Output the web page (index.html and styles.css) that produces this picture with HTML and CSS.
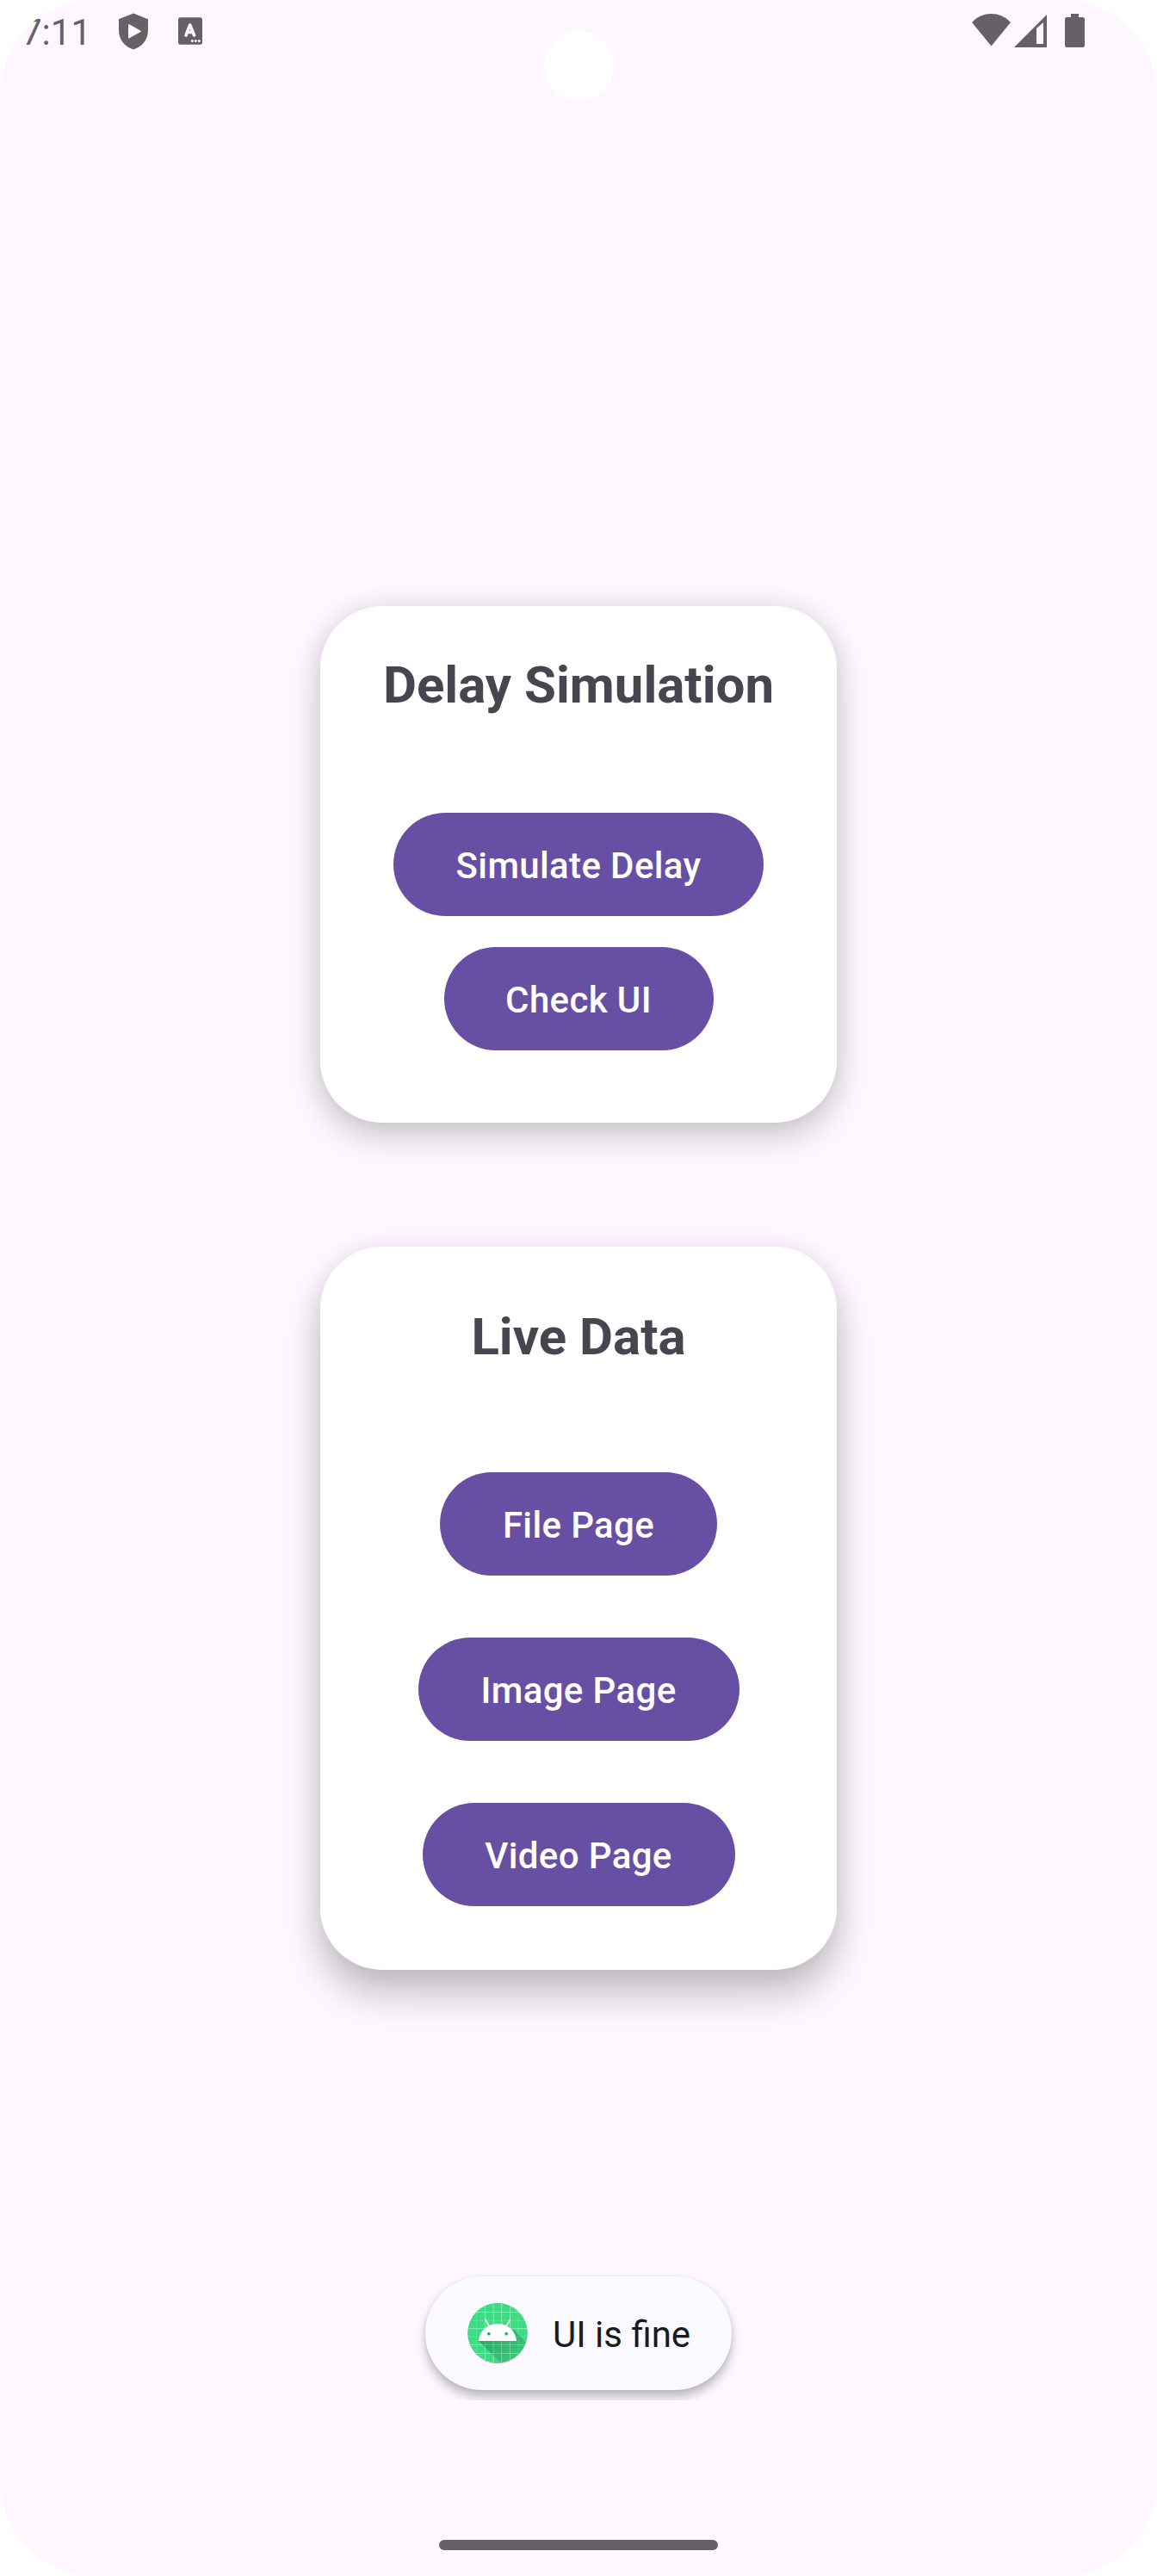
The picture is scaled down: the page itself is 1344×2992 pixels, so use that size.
FILE: index.html
```html
<!DOCTYPE html>
<html lang="en">
<head>
<meta charset="utf-8">
<title>Delay Simulation</title>
<link rel="stylesheet" href="styles.css">
</head>
<body>
<div class="screen">
  <header class="status-bar">
    <span class="clock">7:11</span>
    <svg class="shield" width="36" height="43" viewBox="0 0 36 43"><path fill="currentColor" fill-rule="evenodd" d="M18 .5 35 7.3V20c0 11-7 19.500-17 22.500C8 39.500 1 31 1 20V7.300zM12 14.500V28.500q0 1.500 1.300.8L26.400 22q1-.7 0-1.300L13.300 13.300Q12 12.700 12 14.500z"/></svg>
    <svg class="keyboard" width="28" height="32" viewBox="0 0 28 32"><rect width="28" height="31.500" y=".3" rx="2.500" fill="currentColor"/><path d="M9 21 13.700 9 18.600 21M10.500 17.500h6.500" fill="none" stroke="#fef7ff" stroke-width="3.600" stroke-linecap="round" stroke-linejoin="round"/><g fill="#fef7ff"><circle cx="16.300" cy="27.500" r="1.500"/><circle cx="20.300" cy="27.500" r="1.500"/><circle cx="24.300" cy="27.500" r="1.500"/></g></svg>
    <span class="spacer"></span>
    <svg class="wifi" width="45" height="38" viewBox="0 0 45 38"><path fill="currentColor" d="M0 10C12-3.300 33-3.300 45 10L22.500 37.500z"/></svg>
    <svg class="signal" width="38" height="38" viewBox="0 0 38 38"><path fill="currentColor" fill-rule="evenodd" d="M38 0V38H0zM26 16V34h8V9z"/></svg>
    <svg class="battery" width="23" height="39" viewBox="0 0 23 39"><path fill="currentColor" d="M7 0h9v4h4.500Q23 4 23 6.500v30Q23 39 20.500 39h-18Q0 39 0 36.500v-30Q0 4 2.500 4H7z"/></svg>
  </header>
  <div class="camera"></div>
  <main class="content">
    <section class="card card-delay">
      <h2>Delay Simulation</h2>
      <button class="simulate">Simulate Delay</button>
      <button class="check">Check UI</button>
    </section>
    <section class="card card-live">
      <h2>Live Data</h2>
      <button class="file">File Page</button>
      <button class="image">Image Page</button>
      <button class="video">Video Page</button>
    </section>
  </main>
  <div class="toast-area">
    <div class="toast">
      <svg class="app-icon" width="72" height="72" viewBox="0 0 72 72">
        <defs>
          <clipPath id="disc"><circle cx="36" cy="35.500" r="34.700"/></clipPath>
          <linearGradient id="shade" x1="0" y1="0" x2="1" y2="1"><stop offset="0" stop-color="#000" stop-opacity=".3"/><stop offset="1" stop-color="#000" stop-opacity="0"/></linearGradient>
        </defs>
        <circle cx="36" cy="36.500" r="34.700" fill="#a9aeb0"/>
        <g clip-path="url(#disc)">
          <rect width="72" height="72" fill="#3ddc84"/>
          <path d="M21.500 0v72M31.200 0v72M40.700 0v72M50.500 0v72M0 11.500h72M0 30.700h72M0 49.500h72M0 59.500h72" stroke="#fff" stroke-opacity=".45" stroke-width=".9"/>
          <path d="M11.500 0v72M60 0v72M0 21.300h72M0 40h72" stroke="#fff" stroke-opacity=".18" stroke-width=".9"/>
          <path d="M14 45 43 74H80V58L55 32z" fill="url(#shade)"/>
        </g>
        <path d="M22 20.500 26.500 28M50.500 20.500 46 28" stroke="#fff" stroke-width="1.500" stroke-linecap="round"/>
        <path d="M14 45C15 33 24 25 36 25s21 8 22 20z" fill="#fff"/>
        <circle cx="25.800" cy="36.700" r="1.900" fill="#2fae6a"/><circle cx="46.200" cy="36.700" r="1.900" fill="#2fae6a"/>
      </svg>
      <span>UI is fine</span>
    </div>
  </div>
  <footer class="nav"><div class="handle"></div></footer>
</div>
</body>
</html>
```
FILE: styles.css
```css
body {
  margin: 0;
  background: #fff;
  font-family: Roboto, sans-serif;
}

.screen {
  position: relative;
  display: flex;
  flex-direction: column;
  width: 1344px;
  height: 2992px;
  overflow: hidden;
  border-radius: 108px;
  background: #fef7ff;
}

.status-bar {
  display: flex;
  align-items: flex-start;
  box-sizing: border-box;
  height: 156px;
  padding: 15px 84px 0 25px;
  color: #656266;
}

.clock {
  width: 112px;
  margin-top: -2px;
  font-size: 42px;
  line-height: 49px;
}

.keyboard { margin: 5px 0 0 34px; }
.spacer { flex: 1; }
.wifi { margin-top: 1px; }
.signal { margin: 2px 0 0 4px; }
.battery { margin: 1px 0 0 21px; }

.camera {
  position: absolute;
  top: 36px;
  left: 632px;
  width: 81px;
  height: 81px;
  border-radius: 50%;
  background: #fff;
}

.content {
  display: flex;
  flex-direction: column;
  align-items: center;
  gap: 144px;
  padding-top: 548px;
}

.card {
  display: flex;
  flex-direction: column;
  align-items: center;
  box-sizing: border-box;
  width: 600px;
  border-radius: 72px;
  background: #fff;
}

.card-delay {
  height: 600px;
  padding-top: 57px;
  box-shadow: 0 16px 38px rgba(0, 0, 0, .19), 0 0 30px rgba(0, 0, 0, .08);
}

.card-live {
  height: 840px;
  padding-top: 70px;
  box-shadow: 0 28px 44px rgba(0, 0, 0, .23), 0 0 30px rgba(0, 0, 0, .07);
}

h2 {
  margin: 0;
  color: #49454f;
  font-size: 60px;
  font-weight: 700;
  line-height: 70px;
  white-space: nowrap;
}

button {
  box-sizing: border-box;
  height: 120px;
  padding: 3px 0 0;
  border: 0;
  border-radius: 60px;
  background: #6750a4;
  color: #fff;
  font: 500 42px/50px Roboto, sans-serif;
  letter-spacing: .36px;
  white-space: nowrap;
}

.simulate { width: 430px; margin-top: 113px; }
.check { width: 313px; margin-top: 36px; }
.file { width: 322px; margin-top: 122px; }
.image { width: 373px; margin-top: 72px; }
.video { width: 363px; margin-top: 72px; }

/* The toast window cuts its shadow 12px below the pill. */
.toast-area {
  display: flex;
  justify-content: center;
  height: 144px;
  margin-top: 356px;
  clip-path: inset(-20px 0 0);
}

.toast {
  display: flex;
  align-items: center;
  box-sizing: border-box;
  width: 356px;
  height: 132px;
  padding-left: 48px;
  border-radius: 66px;
  background: #f9f9ff;
  box-shadow: 0 8px 12px rgba(0, 0, 0, .25), 0 0 4px rgba(0, 0, 0, .08);
  color: #1a1b20;
  font-size: 42px;
  line-height: 50px;
}

.toast span {
  margin-left: 28px;
  padding-top: 3px;
  white-space: nowrap;
}

.nav {
  display: flex;
  justify-content: center;
  margin-top: 162px;
}

.handle {
  width: 324px;
  height: 12px;
  border-radius: 6px;
  background: #656266;
}
```
